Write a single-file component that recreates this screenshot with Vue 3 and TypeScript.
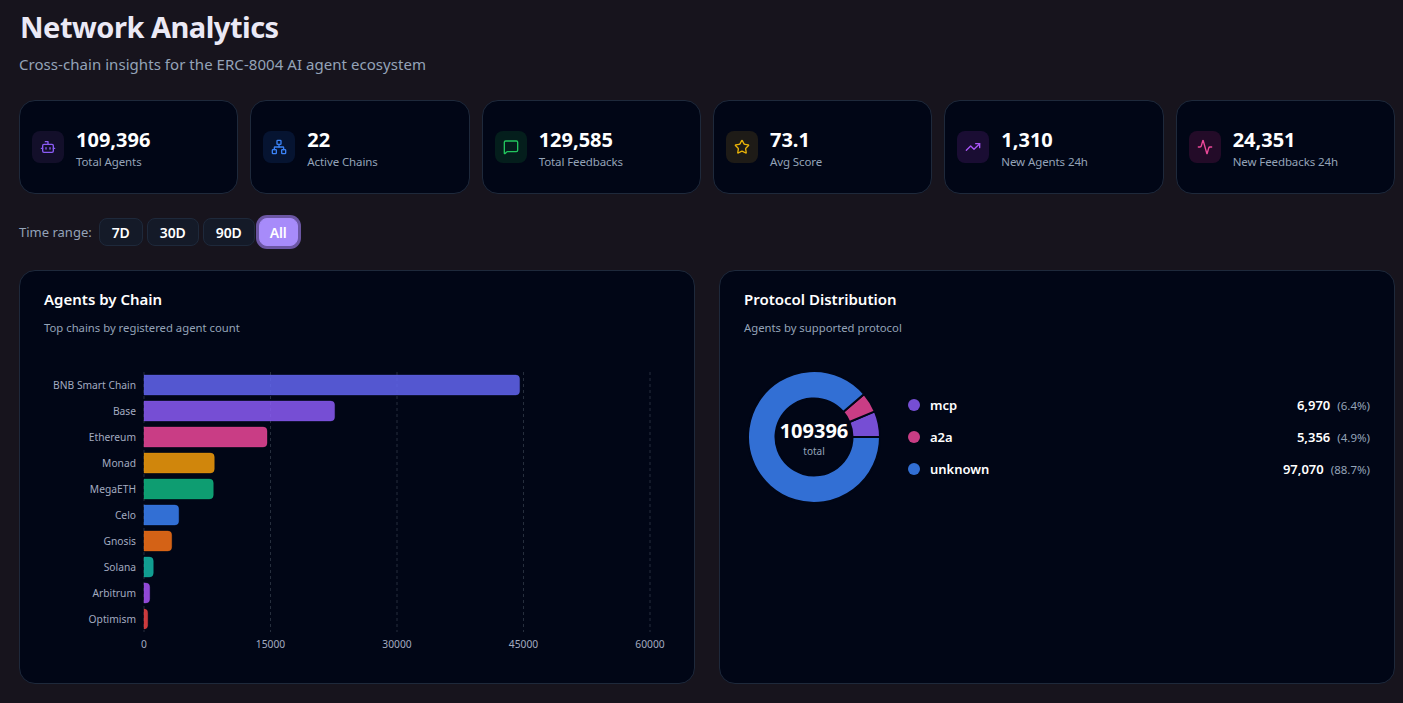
<script setup lang="ts">
interface Stat { value: string; label: string; color: string; tint: string; icon: string[] }
const stats: Stat[] = [
  { value: '109,396', label: 'Total Agents', color: '#8b5cf6', tint: '#130f2a', icon: ['M12 8V4H8', 'M6 8h12a2 2 0 0 1 2 2v8a2 2 0 0 1-2 2H6a2 2 0 0 1-2-2v-8a2 2 0 0 1 2-2z', 'M2 14h2', 'M20 14h2', 'M15 13v2', 'M9 13v2'] },
  { value: '22', label: 'Active Chains', color: '#3b82f6', tint: '#061431', icon: ['M17 16h4a1 1 0 0 1 1 1v4a1 1 0 0 1-1 1h-4a1 1 0 0 1-1-1v-4a1 1 0 0 1 1-1z', 'M3 16h4a1 1 0 0 1 1 1v4a1 1 0 0 1-1 1H3a1 1 0 0 1-1-1v-4a1 1 0 0 1 1-1z', 'M10 2h4a1 1 0 0 1 1 1v4a1 1 0 0 1-1 1h-4a1 1 0 0 1-1-1V3a1 1 0 0 1 1-1z', 'M5 16v-3a1 1 0 0 1 1-1h12a1 1 0 0 1 1 1v3', 'M12 12V8'] },
  { value: '129,585', label: 'Total Feedbacks', color: '#22c55e', tint: '#041e1c', icon: ['M22 17a2 2 0 0 1-2 2H6.828a2 2 0 0 0-1.414.586l-2.202 2.202A.71.71 0 0 1 2 21.286V5a2 2 0 0 1 2-2h16a2 2 0 0 1 2 2z'] },
  { value: '73.1', label: 'Avg Score', color: '#eab308', tint: '#1e1b17', icon: ['M11.525 2.295a.53.53 0 0 1 .95 0l2.31 4.679a2.123 2.123 0 0 0 1.595 1.16l5.166.756a.53.53 0 0 1 .294.904l-3.736 3.638a2.123 2.123 0 0 0-.611 1.878l.882 5.14a.53.53 0 0 1-.771.56l-4.618-2.428a2.122 2.122 0 0 0-1.973 0L6.396 21.01a.53.53 0 0 1-.77-.56l.881-5.139a2.122 2.122 0 0 0-.611-1.879L2.16 9.795a.53.53 0 0 1 .294-.906l5.165-.755a2.122 2.122 0 0 0 1.597-1.16z'] },
  { value: '1,310', label: 'New Agents 24h', color: '#a855f7', tint: '#1a0d33', icon: ['M16 7h6v6', 'M22 7l-8.5 8.5-5-5L2 17'] },
  { value: '24,351', label: 'New Feedbacks 24h', color: '#ec4899', tint: '#230b28', icon: ['M22 12h-2.48a2 2 0 0 0-1.93 1.46l-2.35 8.36a.25.25 0 0 1-.48 0L9.24 2.18a.25.25 0 0 0-.48 0l-2.35 8.36A2 2 0 0 1 4.49 12H2'] },
]
const ranges = ['7D', '30D', '90D', 'All']
const bars = [
  { name: 'BNB Smart Chain', end: 519.6, color: '#6366f1' },
  { name: 'Base', end: 334.6, color: '#8b5cf6' },
  { name: 'Ethereum', end: 267, color: '#ec4899' },
  { name: 'Monad', end: 214.3, color: '#f59e0b' },
  { name: 'MegaETH', end: 213.3, color: '#10b981' },
  { name: 'Celo', end: 178.7, color: '#3b82f6' },
  { name: 'Gnosis', end: 171.7, color: '#f97316' },
  { name: 'Solana', end: 153.3, color: '#14b8a6' },
  { name: 'Arbitrum', end: 149.7, color: '#a855f7' },
  { name: 'Optimism', end: 147.7, color: '#ef4444' },
]
const ticks = [0, 15000, 30000, 45000, 60000]
const X0 = 144
const PX = 126.5 / 15000
const tickX = (t: number) => X0 + t * PX
function barPath(end: number, i: number): string {
  const x = X0 - 20
  const y = 15 + i * 26
  const w = end - X0
  const r = Math.min(4, w)
  return `M${x} ${y}h${w - r}a${r} ${r} 0 0 1 ${r} ${r}v${20 - 2 * r}a${r} ${r} 0 0 1 -${r} ${r}h-${w - r}z`
}
function arc(a0: number, a1: number): string {
  const R = 66, r = 38.5, c = 70
  const p = (rad: number, a: number) => {
    const t = (a * Math.PI) / 180
    return `${(c + rad * Math.cos(t)).toFixed(2)} ${(c - rad * Math.sin(t)).toFixed(2)}`
  }
  const large = a1 - a0 > 180 ? 1 : 0
  return `M${p(R, a0)}A${R} ${R} 0 ${large} 0 ${p(R, a1)}L${p(r, a1)}A${r} ${r} 0 ${large} 1 ${p(r, a0)}Z`
}
const protocols = [
  { name: 'mcp', value: '6,970', pct: '(6.4%)', color: '#8b5cf6', a0: 0, a1: 22.9 },
  { name: 'a2a', value: '5,356', pct: '(4.9%)', color: '#ec4899', a0: 22.9, a1: 40.6 },
  { name: 'unknown', value: '97,070', pct: '(88.7%)', color: '#3b82f6', a0: 40.6, a1: 360 },
]
</script>

<template>
  <main class="page">
    <header class="head">
      <h1>Network Analytics</h1>
      <p>Cross-chain insights for the ERC-8004 AI agent ecosystem</p>
    </header>

    <section class="stats">
      <article v-for="s in stats" :key="s.label" class="stat">
        <div class="icon" :style="{ background: s.tint, color: s.color }">
          <svg width="16" height="16" viewBox="0 0 24 24" fill="none" stroke="currentColor" stroke-width="2" stroke-linecap="round" stroke-linejoin="round">
            <path v-for="d in s.icon" :key="d" :d="d" />
          </svg>
        </div>
        <div>
          <div class="value">{{ s.value }}</div>
          <div class="label">{{ s.label }}</div>
        </div>
      </article>
    </section>

    <div class="range">
      <span class="range-label">Time range:</span>
      <button v-for="r in ranges" :key="r" class="btn" :class="{ active: r === 'All' }">{{ r }}</button>
    </div>

    <section class="panels">
      <article class="panel">
        <h2>Agents by Chain</h2>
        <p class="desc">Top chains by registered agent count</p>
        <svg class="bars" width="650" height="300" viewBox="0 0 650 300">
          <line v-for="t in ticks.slice(1)" :key="t" :x1="tickX(t) - 20" :x2="tickX(t) - 20" y1="12" y2="272" class="grid" />
          <line :x1="X0 - 20" :x2="X0 - 20" y1="12" y2="272" class="grid" />
          <g v-for="(b, i) in bars" :key="b.name">
            <path :d="barPath(b.end, i)" :fill="b.color" fill-opacity="0.85" :stroke="b.color" stroke-opacity="0.3" />
            <text :x="X0 - 28" :y="29 + i * 26" text-anchor="end" class="axis">{{ b.name }}</text>
          </g>
          <text v-for="t in ticks" :key="t" :x="tickX(t) - 20" y="288" text-anchor="middle" class="axis">{{ t }}</text>
        </svg>
      </article>

      <article class="panel">
        <h2>Protocol Distribution</h2>
        <p class="desc">Agents by supported protocol</p>
        <div class="dist">
          <svg class="donut" width="140" height="140" viewBox="0 0 140 140">
            <path v-for="p in protocols" :key="p.name" :d="arc(p.a0, p.a1)" :fill="p.color" fill-opacity="0.85" stroke="#010616" stroke-width="2" />
            <text x="70" y="71" text-anchor="middle" class="donut-total">109396</text>
            <text x="70" y="88" text-anchor="middle" class="donut-sub">total</text>
          </svg>
          <ul class="legend">
            <li v-for="p in protocols" :key="p.name">
              <span class="dot" :style="{ background: p.color, opacity: 0.85 }"></span>
              <span class="name">{{ p.name }}</span>
              <span class="num">{{ p.value }}</span>
              <span class="pct">{{ p.pct }}</span>
            </li>
          </ul>
        </div>
      </article>
    </section>
  </main>
</template>

<style>
html, body { margin: 0; background: #17141d; }
</style>

<style scoped>
.page {
  height: 703px;
  box-sizing: border-box;
  overflow: hidden;
  padding: 9px 8px 0 19px;
  font-family: "Noto Sans", sans-serif;
  background: #17141d;
  color: #fff;
}
.head h1 { margin: 0; font-size: 29px; line-height: 36px; font-weight: 700; letter-spacing: -.5px; color: #ebe9f5; padding-left: 1px; }
.head p { margin: 7px 0 0; font-size: 15px; line-height: 24px; letter-spacing: .05px; color: #94a3b8; }
.stats { display: grid; grid-template-columns: repeat(6, minmax(0, 1fr)); gap: 12px; margin-top: 24px; }
.stat {
  height: 94px; box-sizing: border-box; display: flex; align-items: center; gap: 12px; padding: 0 12px;
  background: #010616; border: 1px solid #1e293b; border-radius: 16px;
}
.icon { width: 32px; height: 32px; border-radius: 8px; display: flex; align-items: center; justify-content: center; flex: none; }
.value { font-size: 20px; line-height: 28px; font-weight: 700; padding-top: 1px; }
.label { font-size: 11.5px; line-height: 16px; letter-spacing: -.1px; color: #94a3b8; }
.range { display: flex; align-items: center; gap: 4px; margin-top: 24px; height: 28px; }
.range-label { font-size: 13px; color: #94a3b8; margin-right: 3px; }
.btn {
  height: 28px; padding: 0 12px; font: 600 14px "Noto Sans", sans-serif; letter-spacing: -.1px; color: #fff;
  background: #141a28; border: 1px solid #1e293b; border-radius: 8px;
}
.btn.active { background: #a78bfa; border-color: #a78bfa; box-shadow: 0 0 0 3px #6b56a3; padding: 0 10px; }
.panels { display: grid; grid-template-columns: repeat(2, minmax(0, 1fr)); gap: 24px; margin-top: 24px; }
.panel {
  height: 414px; box-sizing: border-box; padding: 18px 24px; background: #010616;
  border: 1px solid #1e293b; border-radius: 16px;
}
.panel h2 { margin: 0; font-size: 15px; line-height: 20px; font-weight: 600; }
.desc { margin: 11px 0 0; font-size: 11.3px; line-height: 16px; color: #94a3b8; }
.bars { display: block; margin: 24px 0 0 -24px; }
.grid { stroke: #4b5563; stroke-opacity: .5; stroke-dasharray: 3 3; }
.axis { font-size: 10.25px; fill: #a3abc0; }
.dist { display: flex; align-items: center; gap: 24px; margin-top: 31px; }
.donut { flex: none; }
.donut-total { font-size: 20px; font-weight: 700; fill: #fff; }
.donut-sub { font-size: 10px; fill: #94a3b8; }
.legend { flex: 1; list-style: none; margin: 0; padding: 0; display: flex; flex-direction: column; gap: 8px; }
.legend li { display: flex; align-items: center; height: 24px; }
.dot { width: 12px; height: 12px; border-radius: 50%; margin-right: 10px; }
.name { flex: 1; font-size: 13px; font-weight: 600; }
.num { font-size: 13px; font-weight: 600; }
.pct { font-size: 11.5px; color: #94a3b8; margin-left: 7px; }
</style>
